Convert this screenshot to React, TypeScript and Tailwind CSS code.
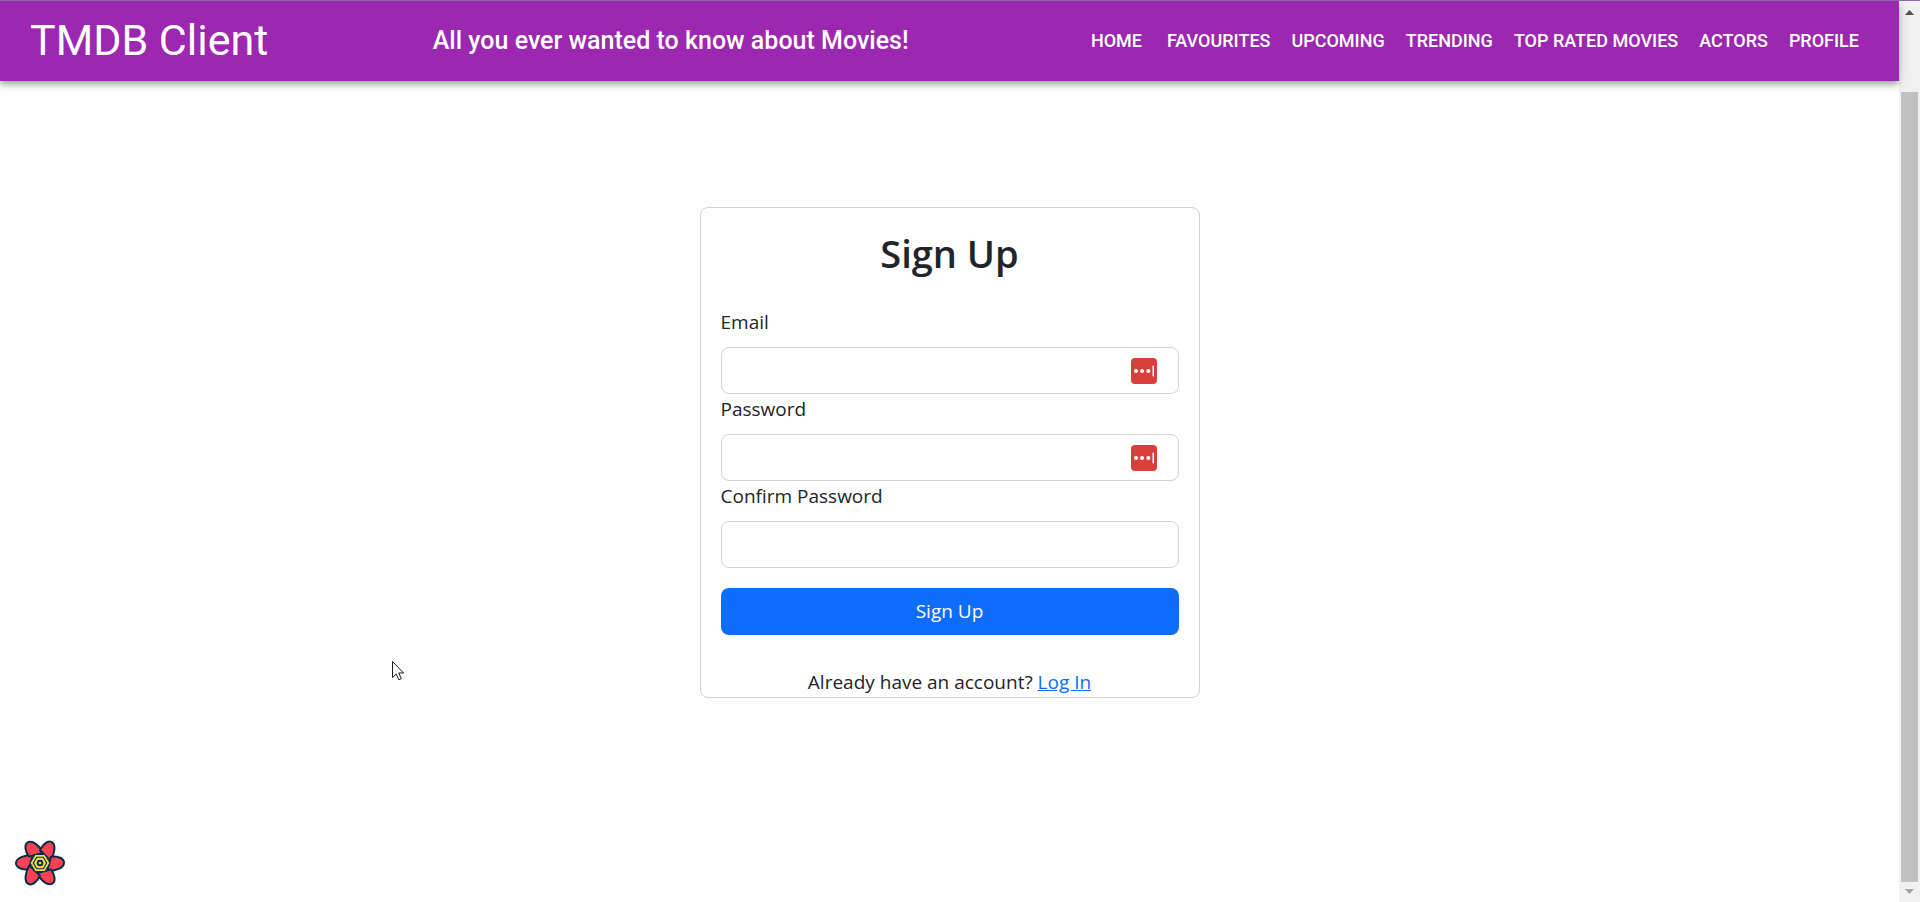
import { useState } from "react";

const links = ["FAVOURITES", "UPCOMING", "TRENDING", "TOP RATED MOVIES", "ACTORS", "PROFILE"];

function Header() {
  return (
    <header className="relative flex h-20 items-center justify-between bg-[#9c27b0] px-[30px] font-['Roboto',sans-serif] text-white shadow-[0_3px_5px_-1px_rgba(0,0,0,0.2),0_5px_6px_0_rgba(0,0,0,0.14),0_1px_13px_0_rgba(0,0,0,0.12)]">
      <h1 className="pb-[2px] text-[43px] leading-[50px] whitespace-nowrap">TMDB Client</h1>
      <p className="mr-2 text-[25px] leading-[40px] font-medium whitespace-nowrap">
        All you ever wanted to know about Movies!
      </p>
      <nav className="flex items-center gap-px text-[18px] leading-[30px] font-medium whitespace-nowrap">
        <a href="#home" className="mr-1 px-[10px]">HOME</a>
        {links.map((label) => (
          <a key={label} href="#" className="px-[10px]">
            {label}
          </a>
        ))}
      </nav>
    </header>
  );
}

function PasswordManagerIcon() {
  return (
    <svg
      className="pointer-events-none absolute top-[11px] right-[22px]"
      width="26"
      height="26"
      viewBox="0 0 26 26"
      aria-hidden="true"
    >
      <rect width="26" height="26" rx="4" fill="#d93f3b" />
      <circle cx="5" cy="13" r="2" fill="#fff" />
      <circle cx="11" cy="13" r="2" fill="#fff" />
      <circle cx="17.3" cy="13" r="2" fill="#fff" />
      <rect x="21.5" y="7.5" width="1.5" height="11" rx="0.7" fill="#fff" />
    </svg>
  );
}

type FieldProps = { id: string; label: string; type: string; managed?: boolean };

function Field({ id, label, type, managed }: FieldProps) {
  const [value, setValue] = useState("");
  return (
    <div>
      <label htmlFor={id} className="mb-[10px] block leading-[30px]">
        {label}
      </label>
      <div className="relative">
        <input
          id={id}
          type={type}
          value={value}
          onChange={(e) => setValue(e.target.value)}
          className="block h-[47px] w-full rounded-[8px] border border-[#ced4da] bg-white px-4 outline-none"
        />
        {managed && <PasswordManagerIcon />}
      </div>
    </div>
  );
}

function SignUpCard() {
  return (
    <section className="w-full max-w-[500px] rounded-[8px] border border-[#d0d2d4] bg-white px-5 pt-5">
      <h2 className="mb-[29px] text-center text-[38px] leading-[50px] font-semibold">Sign Up</h2>
      <form onSubmit={(e) => e.preventDefault()}>
        <Field id="email" label="Email" type="email" managed />
        <Field id="password" label="Password" type="password" managed />
        <Field id="confirm" label="Confirm Password" type="password" />
        <button type="submit" className="mt-5 block h-[47px] w-full rounded-[8px] bg-[#0d6efd] text-white">
          Sign Up
        </button>
      </form>
      <p className="mt-8 text-center leading-[30px]">
        Already have an account?{" "}
        <a href="#login" className="text-[#0d6efd] underline">
          Log In
        </a>
      </p>
    </section>
  );
}

const petals = [0, 60, 120, 180, 240, 300];

function QueryButton() {
  return (
    <button type="button" aria-label="Open query tools" className="absolute bottom-[14px] left-[15px]">
      <svg width="50" height="50" viewBox="-75 -75 150 150">
        {petals.map((a) => (
          <path
            key={a}
            transform={`rotate(${a})`}
            d="M-22 -24C-46 -24 -72 -15 -72 1C-72 14 -53 21 -33 19Z"
            fill="#ff4154"
            stroke="#002c4b"
            strokeWidth="6"
            strokeLinejoin="round"
          />
        ))}
        <polygon points="-31,0 -15.5,-27 15.5,-27 31,0 15.5,27 -15.5,27" fill="#002c4b" />
        <polygon points="-28,0 -14,-24 14,-24 28,0 14,24 -14,24" fill="#ffd94c" />
        <polygon points="-22,0 -11,-19 11,-19 22,0 11,19 -11,19" fill="#002c4b" />
        <polygon points="-18,0 -9,-15.5 9,-15.5 18,0 9,15.5 -9,15.5" fill="#ffd94c" />
        <circle r="10" fill="#002c4b" />
        <circle r="4" fill="#ffd94c" />
      </svg>
    </button>
  );
}

function Pointer() {
  return (
    <svg
      className="pointer-events-none absolute top-[660px] left-[391px]"
      width="15"
      height="22"
      viewBox="0 0 15 22"
      aria-hidden="true"
    >
      <path
        d="M1.5 1.5V17.5L5.2 14L7.8 19.8L10.3 18.7L7.8 13H12.6Z"
        fill="#fff"
        stroke="#1c1c28"
        strokeWidth="1"
      />
    </svg>
  );
}

function ScrollRail() {
  return (
    <div className="flex w-[21px] shrink-0 flex-col items-center bg-[#f1f1f1]" aria-hidden="true">
      <svg className="mt-[9px]" width="9" height="5" viewBox="0 0 9 5">
        <path d="M0 5L4.5 0L9 5Z" fill="#505050" />
      </svg>
      <div className="mt-[77px] w-[17px] flex-1 bg-[#c1c1c1]" />
      <svg className="mt-[7px] mb-2" width="9" height="5" viewBox="0 0 9 5">
        <path d="M0 0L4.5 5L9 0Z" fill="#a3a3a3" />
      </svg>
    </div>
  );
}

export default function App() {
  return (
    <div className="relative flex min-h-screen flex-col bg-white font-['Open_Sans',sans-serif] text-[19px] text-[#212529]">
      <div className="h-px bg-[#8b6ab5]" />
      <div className="flex flex-1">
        <div className="min-w-0 flex-1">
          <Header />
          <main className="flex justify-center pt-[126px] pb-10">
            <SignUpCard />
          </main>
        </div>
        <ScrollRail />
      </div>
      <QueryButton />
      <Pointer />
    </div>
  );
}
